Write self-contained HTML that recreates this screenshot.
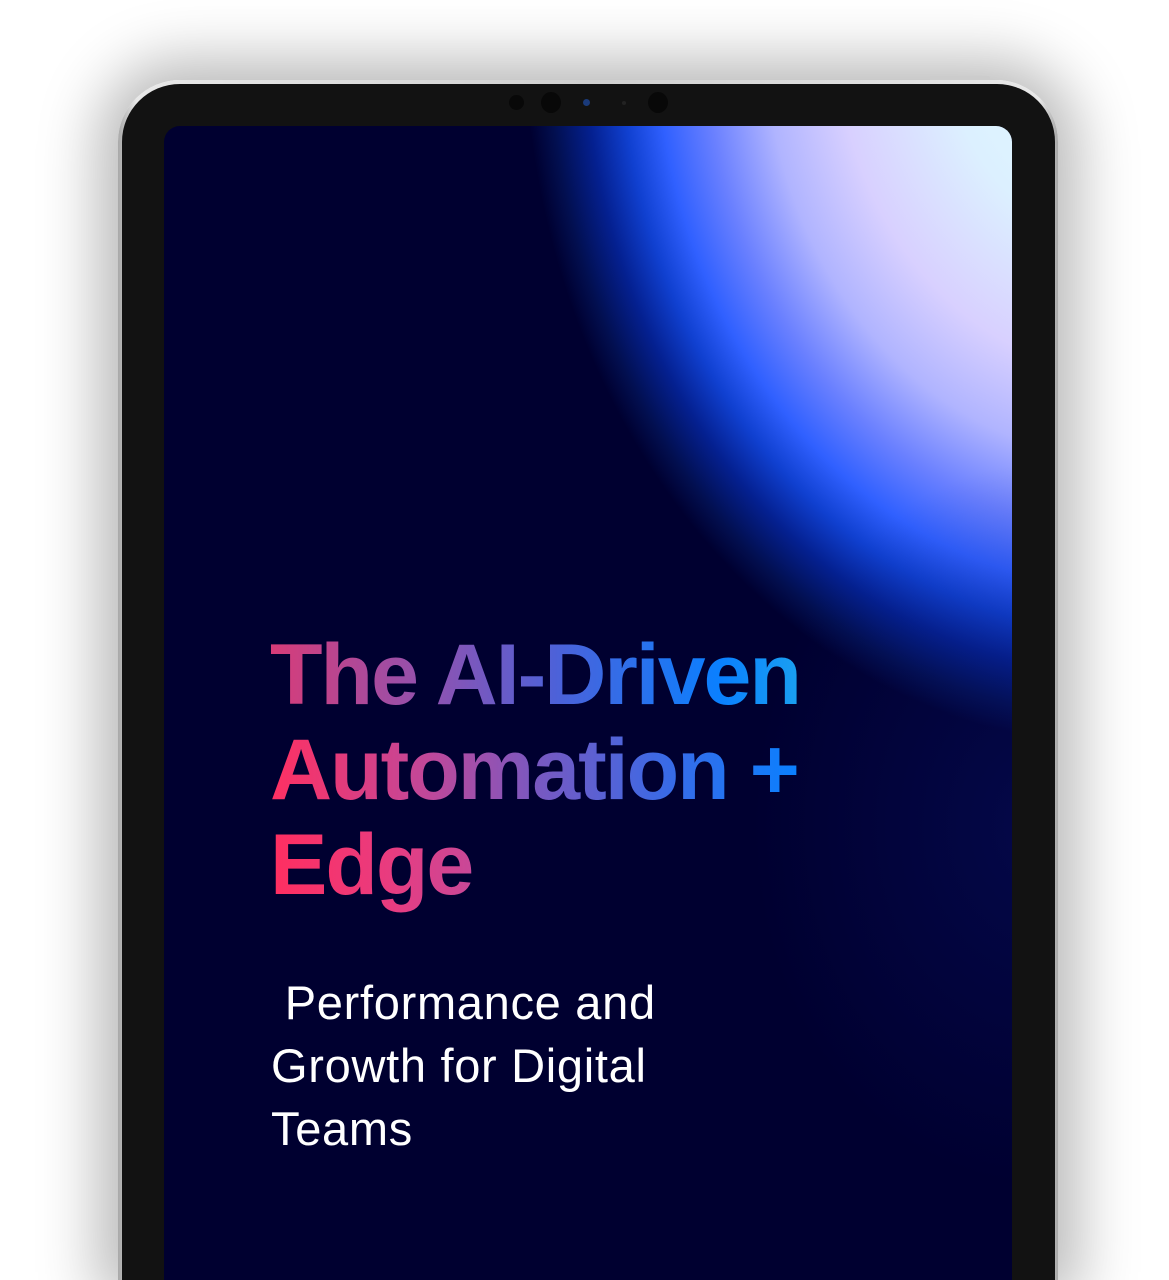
<!DOCTYPE html>
<html><head><meta charset="utf-8"><style>
html,body{margin:0;padding:0;background:#fff;width:1169px;height:1280px;overflow:hidden}
#wrap{position:relative;width:1169px;height:1280px;overflow:hidden}
.shadow{position:absolute;left:118px;top:80px;width:940px;height:1200px;border-radius:62px 62px 0 0;box-shadow:0 0 60px 20px rgba(0,0,0,0.28)}
.frame{position:absolute;left:118px;top:80px;width:940px;height:1200px;border-radius:62px 62px 0 0;background:linear-gradient(90deg,#a8a8a8,#e8e8e8 2%,#d0d0d0 50%,#e8e8e8 98%,#a8a8a8)}
.bezel{position:absolute;left:122px;top:84px;width:933px;height:1196px;border-radius:58px 58px 0 0;background:#121212}
.screen{position:absolute;left:164px;top:126px;width:848px;height:1154px;border-radius:16px 16px 0 0;overflow:hidden;background:#000030}
.glow{position:absolute;inset:0;background:
radial-gradient(ellipse 600px 720px at 960px -100px,#e4ffff 0%,#dcf0ff 30%,#d8d0ff 48%,#b0b4ff 60%,#6a80ff 70%,#3060ff 78%,#1040d0 84%,#042090 90%,#020f50 96%,rgba(0,0,48,0) 100%)}
.glow2{position:absolute;inset:0;background:radial-gradient(ellipse 420px 520px at 880px 700px,rgba(10,20,110,0.4),rgba(0,0,48,0) 70%)}
.cam{position:absolute;border-radius:50%;background:#080808}
h1{position:absolute;left:270px;top:628px;margin:0;font:bold 86px/95px "Liberation Sans",sans-serif;letter-spacing:-2px;width:700px}
h1 span{display:inline-block;color:transparent;-webkit-text-fill-color:transparent}
.l1{background-image:linear-gradient(90deg,#d83c78 0%,#9052b0 30%,#4a62da 55%,#0a80ff 85%,#1aa0f0 100%);-webkit-background-clip:text;background-clip:text}
.l2{background-image:linear-gradient(90deg,#ff3062 0%,#c0489a 30%,#7a58c0 50%,#3a6ae6 75%,#0a80ff 100%);-webkit-background-clip:text;background-clip:text}
.l3{background-image:linear-gradient(90deg,#ff2e60 0%,#e83c80 60%,#c84898 100%);-webkit-background-clip:text;background-clip:text}
p{position:absolute;left:271px;top:971px;margin:0;color:#fff;font:47px/63px "Liberation Sans",sans-serif;letter-spacing:0.7px}
.btn{position:absolute;background:#ccc;border-radius:2px}
</style></head><body><div id="wrap">
<div class="shadow"></div>
<div class="btn" style="left:930px;top:76px;width:60px;height:5px"></div>
<div class="btn" style="left:1056px;top:183px;width:5px;height:52px"></div>
<div class="btn" style="left:1056px;top:245px;width:5px;height:52px"></div>
<div class="frame"></div>
<div class="bezel"></div>
<div class="cam" style="left:509px;top:95px;width:15px;height:15px"></div>
<div class="cam" style="left:541px;top:92px;width:20px;height:21px"></div>
<div class="cam" style="left:583px;top:99px;width:7px;height:7px;background:#1a3a7a"></div>
<div class="cam" style="left:622px;top:101px;width:4px;height:4px;background:#222"></div>
<div class="cam" style="left:648px;top:92px;width:20px;height:21px"></div>
<div class="screen"><div class="glow"></div><div class="glow2"></div></div>
<h1><span class="l1">The AI-Driven</span><br><span class="l2">Automation +</span><br><span class="l3">Edge</span></h1>
<p>&nbsp;Performance and<br>Growth for Digital<br>Teams</p>
</div></body></html>
